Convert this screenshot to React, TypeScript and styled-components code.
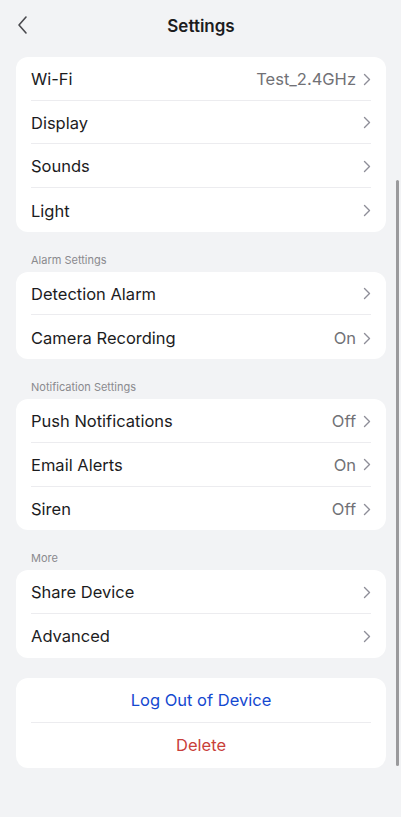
import React from 'react'
import styled, { createGlobalStyle } from 'styled-components'

const GlobalStyle = createGlobalStyle`
  html, body {
    margin: 0;
    padding: 0;
    background: #f2f3f5;
    font-family: Inter, "Noto Sans", sans-serif;
    -webkit-font-smoothing: antialiased;
  }
`

const Page = styled.div`
  position: relative;
  min-height: 817px;
  padding: 0 15px 40px 16px;
  box-sizing: border-box;
`

const Header = styled.header`
  display: flex;
  align-items: center;
  justify-content: center;
  position: relative;
  height: 48px;
  padding-top: 4px;
  box-sizing: border-box;
`

const BackButton = styled.button`
  position: absolute;
  left: 0;
  top: 15px;
  display: flex;
  padding: 0;
  background: none;
  border: none;
  color: #4a4a4e;
`

const Title = styled.h1`
  margin: 0;
  font-size: 17px;
  font-weight: 600;
  color: #1c1c1e;
`

const Card = styled.div<{ $top?: number }>`
  margin-top: ${({ $top }) => $top ?? 0}px;
  padding: 0 15px;
  background: #fff;
  border-radius: 12px;
`

const Row = styled.div<{ $center?: boolean; $height?: number }>`
  display: flex;
  align-items: center;
  justify-content: ${({ $center }) => ($center ? 'center' : 'space-between')};
  height: ${({ $height }) => $height ?? 43.7}px;
  padding-top: ${({ $center }) => ($center ? 0 : 1.5)}px;
  box-sizing: border-box;
  border-bottom: 1px solid #ececef;

  &:last-child {
    border-bottom: none;
  }
`

const Label = styled.span`
  font-size: 16.5px;
  color: #1c1c1e;
`

const Trailing = styled.span`
  display: flex;
  align-items: center;
  gap: 7px;
  font-size: 16.5px;
  color: #717176;
`

const SectionTitle = styled.div`
  margin: 21px 0 5px 15px;
  font-size: 11px;
  color: #8a8a8e;
`

const ActionText = styled.span<{ $color: string }>`
  font-size: 16.5px;
  color: ${({ $color }) => $color};
`

const ScrollIndicator = styled.div`
  position: absolute;
  right: 2px;
  top: 180px;
  width: 3px;
  height: 586px;
  border-radius: 2px;
  background: #9a9a9c;
`

const Chevron = () => (
  <svg width="8" height="13" viewBox="0 0 8 13" fill="none">
    <path d="M1.5 1.5L6.5 6.5L1.5 11.5" stroke="#8e8e98" strokeWidth="1.4" strokeLinecap="round" strokeLinejoin="round" />
  </svg>
)

interface Item {
  label: string
  value?: string
}

const SettingsRow = ({ label, value }: Item) => (
  <Row>
    <Label>{label}</Label>
    <Trailing>
      {value}
      <Chevron />
    </Trailing>
  </Row>
)

const groups: { title?: string; items: Item[] }[] = [
  {
    items: [
      { label: 'Wi-Fi', value: 'Test_2.4GHz' },
      { label: 'Display' },
      { label: 'Sounds' },
      { label: 'Light' },
    ],
  },
  {
    title: 'Alarm Settings',
    items: [{ label: 'Detection Alarm' }, { label: 'Camera Recording', value: 'On' }],
  },
  {
    title: 'Notification Settings',
    items: [
      { label: 'Push Notifications', value: 'Off' },
      { label: 'Email Alerts', value: 'On' },
      { label: 'Siren', value: 'Off' },
    ],
  },
  {
    title: 'More',
    items: [{ label: 'Share Device' }, { label: 'Advanced' }],
  },
]

const App = () => (
  <>
    <GlobalStyle />
    <Page>
      <Header>
        <BackButton>
          <svg width="14" height="20" viewBox="0 0 14 20" fill="none">
            <path d="M10 2L3 10L10 18" stroke="#4a4a4e" strokeWidth="1.6" strokeLinecap="round" strokeLinejoin="round" />
          </svg>
        </BackButton>
        <Title>Settings</Title>
      </Header>
      {groups.map((group, i) => (
        <React.Fragment key={i}>
          {group.title && <SectionTitle>{group.title}</SectionTitle>}
          <Card $top={group.title ? 0 : 9}>
            {group.items.map((item) => (
              <SettingsRow key={item.label} {...item} />
            ))}
          </Card>
        </React.Fragment>
      ))}
      <Card $top={20}>
        <Row $center $height={45}>
          <ActionText $color="#1448d0">Log Out of Device</ActionText>
        </Row>
        <Row $center $height={45}>
          <ActionText $color="#c9403a">Delete</ActionText>
        </Row>
      </Card>
      <ScrollIndicator />
    </Page>
  </>
)

export default App
